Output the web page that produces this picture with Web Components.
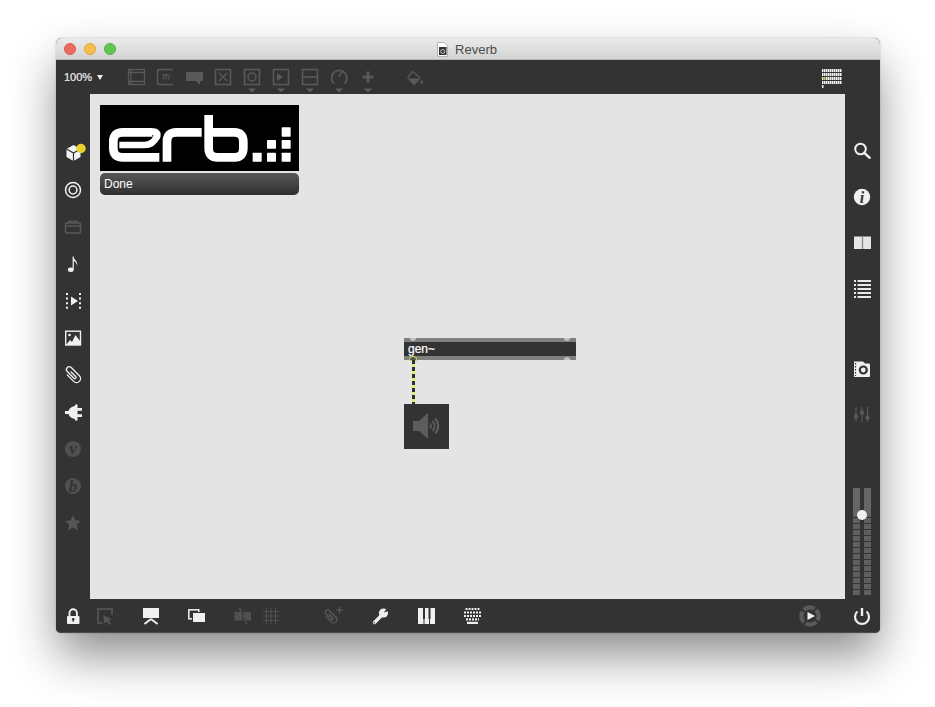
<!DOCTYPE html>
<html><head><meta charset="utf-8"><title>Reverb</title>
<style>
html,body{margin:0;padding:0;background:#fff;height:707px;overflow:hidden}
body{font-family:"Liberation Sans",Arial,sans-serif}
</style></head>
<body>
<max-window>
  <title-bar slot="title">Reverb</title-bar>
  <max-toolbar slot="top">
    <zoom-menu>100%</zoom-menu>
    <max-icon name="object" w="29" h="34"></max-icon>
    <max-icon name="message" w="29" h="34"></max-icon>
    <max-icon name="comment" w="29" h="34"></max-icon>
    <max-icon name="xbox" w="29" h="34"></max-icon>
    <max-icon name="toggle" w="29" h="34"></max-icon>
    <max-icon name="playbox" w="29" h="34"></max-icon>
    <max-icon name="slider" w="29" h="34"></max-icon>
    <max-icon name="dial" w="29" h="34"></max-icon>
    <max-icon name="plus" w="29" h="34"></max-icon>
    <max-icon name="bucket" w="29" h="34" style="margin-left:17px"></max-icon>
    <max-icon name="dots" w="20" h="34" style="margin-left:auto;margin-right:38px"></max-icon>
  </max-toolbar>
  <left-rail slot="left">
    <max-icon name="cube"></max-icon>
    <max-icon name="target"></max-icon>
    <max-icon name="film"></max-icon>
    <max-icon name="note"></max-icon>
    <max-icon name="cue"></max-icon>
    <max-icon name="image"></max-icon>
    <max-icon name="clip"></max-icon>
    <max-icon name="plug"></max-icon>
    <max-icon name="vee"></max-icon>
    <max-icon name="bee"></max-icon>
    <max-icon name="star"></max-icon>
  </left-rail>
  <patcher-canvas slot="canvas">
    <erb-logo></erb-logo>
    <done-label>Done</done-label>
    <gen-object>gen~</gen-object>
    <patch-cord></patch-cord>
    <dac-object></dac-object>
  </patcher-canvas>
  <right-rail slot="right">
    <max-icon name="search"></max-icon>
    <max-icon name="info"></max-icon>
    <max-icon name="book"></max-icon>
    <max-icon name="list"></max-icon>
    <max-icon name="camera" style="margin-top:34px"></max-icon>
    <max-icon name="mixer"></max-icon>
    <level-meter></level-meter>
  </right-rail>
  <bottom-bar slot="bottom">
    <max-icon name="lock" style="margin-left:2px"></max-icon>
    <max-icon name="select" style="margin-left:1px"></max-icon>
    <max-icon name="present" style="margin-left:16px"></max-icon>
    <max-icon name="windows" style="margin-left:16px"></max-icon>
    <max-icon name="snap" style="margin-left:16px"></max-icon>
    <max-icon name="grid" style="margin-left:-1px"></max-icon>
    <max-icon name="clipplus" style="margin-left:33px"></max-icon>
    <max-icon name="wrench" style="margin-left:16px"></max-icon>
    <max-icon name="piano" style="margin-left:16px"></max-icon>
    <max-icon name="keys" style="margin-left:16px"></max-icon>
    <max-icon name="transport" style="margin-left:308px"></max-icon>
    <max-icon name="power" style="margin-left:22px"></max-icon>
  </bottom-bar>
</max-window>
<script>
const D='#595959',W='#f0f0f0',B='#333333';
const dropArrow=`<path d="M10 28.5h8l-4 4z" fill="#5c5c5c"/>`;
const box=(inner)=>`<rect x="6.5" y="9.5" width="15" height="15" fill="none" stroke="${D}" stroke-width="1.6"/>${inner}`;
const clip=(c,sw)=>`<path d="M6 6V15a4 4 0 0 0 8 0V3.500a2.800 2.800 0 0 0-5.600 0V13a1.200 1.200 0 0 0 2.400 0V6.500" fill="none" stroke="${c}" stroke-width="${sw}" stroke-linecap="round"/>`;
function dots(){
  let s='';
  for(let r=0;r<4;r++)for(let c=0;c<10;c++){
    s+=`<rect x="${c*2}" y="${9+r*4}" width="1.5" height="3" fill="${(r==2&&c==1)?'#e2cc2a':'#f4f4f4'}"/>`;
  }
  s+=`<rect x="0" y="25" width="1.5" height="3" fill="#f4f4f4"/>`;
  return s;
}
const ICONS={
 object:`<rect x="6.5" y="9.5" width="16" height="15" fill="none" stroke="${D}" stroke-width="1.3"/><path d="M6 12.5h17M6 21.5h17M9 10v14" stroke="${D}" stroke-width="1.3" fill="none"/>`,
 message:`<path d="M22 9.5H9a2.5 2.5 0 0 0-2.5 2.5v10a2.5 2.5 0 0 0 2.5 2.5H22" fill="none" stroke="${D}" stroke-width="1.4"/><path d="M12 19.5l1.6-5M14.6 19.5l1.6-5M17.2 19.5l1.6-5" stroke="${D}" stroke-width="1.1" fill="none"/><path d="M11 14.5h6" stroke="${D}" stroke-width=".8"/>`,
 comment:`<path d="M6 12h17v9h-3v4l-4-4H6z" fill="${D}"/>`,
 xbox:box(`<path d="M10 13l8 8M18 13l-8 8" stroke="${D}" stroke-width="1.3"/>`),
 toggle:box(`<circle cx="14" cy="17" r="4" fill="none" stroke="${D}" stroke-width="1.5"/>`)+dropArrow,
 playbox:box(`<path d="M10 13l6 4-6 4z" fill="${D}"/>`)+dropArrow,
 slider:box(`<path d="M7 17h14" stroke="${D}" stroke-width="1.6"/>`)+dropArrow,
 dial:`<path d="M9 23.5a7.6 7.6 0 1 1 10.4 0" fill="none" stroke="${D}" stroke-width="1.7"/><path d="M14 17l3.5-6.5" stroke="${D}" stroke-width="1.5"/>`+dropArrow,
 plus:`<path d="M14 11.5v11M8.5 17h11" stroke="${D}" stroke-width="3"/>`+dropArrow,
 bucket:`<path d="M7.500 18.500H20.500L14 25.500z" fill="${D}"/><path d="M7.500 18.200L12.500 11.500 20.500 18.200" fill="none" stroke="${D}" stroke-width="1.400"/><ellipse cx="21.800" cy="22" rx="1.300" ry="1.800" fill="${D}"/>`,
 dots:dots(),
 cube:`<path d="M10.5 2L17.500 6v8l-7 4-7-4V6z" fill="#f2f2f2"/><path d="M3.500 6l7 4 7-4M10.500 10v8" stroke="#333" stroke-width="1.200" fill="none"/><circle cx="18" cy="5.500" r="4.700" fill="#e8d12e"/>`,
 target:`<circle cx="10" cy="10" r="7.500" fill="none" stroke="${W}" stroke-width="1.500"/><circle cx="10" cy="10" r="3.900" fill="none" stroke="${W}" stroke-width="1.500"/>`,
 film:`<rect x="2.500" y="6" width="15" height="10" rx="1" fill="none" stroke="${D}" stroke-width="1.500"/><path d="M5 4.300h10M3 9h14" stroke="${D}" stroke-width="1.300"/>`,
 note:`<ellipse cx="7.800" cy="15.800" rx="2.900" ry="2.200" fill="${W}"/><path d="M10.200 15.500V2.500" stroke="${W}" stroke-width="1.200"/><path d="M10.200 2.500c.5 3 4.900 4.200 4 9.500-.3-2.600-1.800-4.200-4-5.200z" fill="${W}"/>`,
 cue:`<path d="M4 2v16M17 2v16" stroke="${W}" stroke-width="2" stroke-dasharray="2 2.600"/><path d="M8 5.500l7 4.500-7 4.500z" fill="${W}"/>`,
 image:`<rect x="2.700" y="3.200" width="14.800" height="13.800" fill="none" stroke="${W}" stroke-width="1.400"/><path d="M3 17l4-5 2 2 3.500-7L17 13v4z" fill="${W}"/><circle cx="6.500" cy="7" r="1.300" fill="${W}"/>`,
 clip:`<g transform="rotate(-45 10 10)">${clip(W,1.300)}</g>`,
 plug:`<path d="M2 9h5v3H2z" fill="${W}"/><path d="M5.500 10.500C5.500 6.500 8.500 4.500 12 4V2.500h2.500V18.500H12V17c-3.500-.5-6.500-2.500-6.500-6.500z" fill="${W}"/><path d="M14 6h5v2.700h-5zM14 12.300h5V15h-5z" fill="${W}"/>`,
 vee:`<circle cx="10" cy="10" r="8" fill="#505050"/><text x="10" y="15" text-anchor="middle" font-family="'Liberation Serif',serif" font-style="italic" font-weight="bold" font-size="17" fill="#333">v</text>`,
 bee:`<circle cx="10" cy="10" r="8" fill="#505050"/><text x="10" y="15.500" text-anchor="middle" font-family="'Liberation Serif',serif" font-style="italic" font-weight="bold" font-size="17" fill="#333">b</text>`,
 star:`<path d="M10 2l2.300 5.300 5.700.6-4.300 3.800 1.300 5.700-5-3-5 3 1.300-5.700L2 7.900l5.700-.6z" fill="#565656"/>`,
 search:`<circle cx="8.500" cy="8" r="5.300" fill="none" stroke="${W}" stroke-width="2"/><path d="M12.300 11.800l5.400 5" stroke="${W}" stroke-width="2.400" stroke-linecap="round"/>`,
 info:`<circle cx="10" cy="10" r="8.200" fill="${W}"/><text x="10" y="15.500" text-anchor="middle" font-family="'Liberation Serif',serif" font-style="italic" font-weight="bold" font-size="16" fill="#333">i</text>`,
 book:`<rect x="2" y="3.500" width="17" height="12.500" fill="#e6e6e6"/><rect x="9.800" y="3.500" width="1.400" height="12.500" fill="#8f8f8f"/>`,
 list:`<path d="M2 2h2M2 6h2M2 10h2M2 14h2M2 18h2M5.500 2H19M5.500 6H19M5.500 10H19M5.500 14H19M5.500 18H19" stroke="#e8e8e8" stroke-width="2" fill="none"/>`,
 camera:`<path d="M2 2.500h9l2 2h4a1 1 0 0 1 1 1V17a1 1 0 0 1-1 1H2z" fill="${W}"/><path d="M3.500 4v13" stroke="#333" stroke-width="1.200" stroke-dasharray="1.600 1.400"/><circle cx="11.300" cy="11" r="3.500" fill="none" stroke="#333" stroke-width="2.200"/>`,
 mixer:`<path d="M4 2v15M10 2v15M15.500 2v15" stroke="#595959" stroke-width="1.200"/><ellipse cx="4" cy="11.500" rx="2.200" ry="2.600" fill="#595959"/><ellipse cx="10" cy="7.500" rx="2.200" ry="2.600" fill="#595959"/><ellipse cx="15.500" cy="12.500" rx="2.200" ry="2.600" fill="#595959"/>`,
 lock:`<path d="M6.500 10.500V7a3.700 3.700 0 0 1 7.400 0v3.500" fill="none" stroke="${W}" stroke-width="1.900"/><rect x="4" y="10" width="12.500" height="8" rx="1" fill="${W}"/><circle cx="10.200" cy="13.300" r="1.300" fill="#333"/><rect x="9.700" y="13.500" width="1" height="2.500" fill="#333"/>`,
 select:`<path d="M18 9V3H4V17H9" fill="none" stroke="#505050" stroke-width="2"/><path d="M9 9l9 4.200-3.200 1.300 2.200 3.500-2 1-2-3.500-2.500 2.300z" fill="#555"/>`,
 present:`<rect x="3" y="2" width="16" height="10" fill="${W}"/><path d="M11 13L4.500 18M11 13L17.500 18" stroke="${W}" stroke-width="2" fill="none"/>`,
 windows:`<rect x="2.800" y="3.800" width="10" height="9" fill="none" stroke="${W}" stroke-width="1.500"/><rect x="6.500" y="6.500" width="13" height="10" fill="${W}" stroke="#333" stroke-width="1"/>`,
 snap:`<path d="M2.500 6h7.500v8.500H2.500zM11.500 6H19V14.500H11.500z" fill="#505050"/><path d="M7.500 2l7 16" stroke="#5a5a5a" stroke-width="1.200"/><path d="M9.200 5.500l4.800 11" stroke="#333" stroke-width=".8"/>`,
 grid:`<path d="M5.500 2v16M10 2v16M14.500 2v16M2 5.500h16M2 10h16M2 14.500h16" stroke="#4f4f4f" stroke-width="1" fill="none"/>`,
 clipplus:`<g transform="translate(-1.500 2.500) scale(.82) rotate(-45 10 10)">${clip('#5a5a5a',1.500)}</g><path d="M15.500 1v6.500M12 4.200h7" stroke="#5a5a5a" stroke-width="1.300"/>`,
 wrench:`<path d="M4.500 16.500L12 9" stroke="${W}" stroke-width="3.400" stroke-linecap="round"/><circle cx="13.500" cy="7" r="4.600" fill="${W}"/><path d="M13.800 6.500L18 .8l3.500 3.400z" fill="#333"/><circle cx="4.300" cy="16.700" r=".7" fill="#333"/>`,
 piano:`<rect x="2" y="2" width="17" height="16" fill="${W}"/><path d="M7 2h2v11H7zM12.500 2h2v11h-2z" fill="#333"/><path d="M8 13v5M13.500 13v5" stroke="#333" stroke-width="1"/>`,
 keys:`<path d="M3.500 3h14M2 6.500h17M2 10h17M4 13.300h13" stroke="${W}" stroke-width="2.200" stroke-dasharray="2 1" fill="none"/><rect x="5" y="15.800" width="11" height="2.200" fill="${W}"/>`,
 transport:`<circle cx="10" cy="10" r="8.600" fill="none" stroke="#5a5a5a" stroke-width="4.200" stroke-dasharray="11.500 2" stroke-dashoffset="7"/><path d="M7.500 6l7.500 4-7.500 4z" fill="#f0f0f0"/>`,
 power:`<path d="M5.500 5.500a7 7 0 1 0 9 0" fill="none" stroke="${W}" stroke-width="2.200"/><path d="M10 2v8" stroke="${W}" stroke-width="2.400"/>`
};
function shadow(el,html){const r=el.attachShadow({mode:'open'});r.innerHTML=html;return r;}
customElements.define('max-icon',class extends HTMLElement{
 connectedCallback(){
  const w=this.getAttribute('w')||20,h=this.getAttribute('h')||20;
  shadow(this,`<style>:host{display:block;width:${w}px;height:${h}px;flex:none}svg{display:block;overflow:visible}</style>
  <svg width="${w}" height="${h}" viewBox="0 0 ${w} ${h}">${ICONS[this.getAttribute('name')]||''}</svg>`);
 }
});
customElements.define('max-window',class extends HTMLElement{
 constructor(){super();shadow(this,`<style>
 :host{display:grid;grid-template-columns:34px 755px 35px;grid-template-rows:22px 34px 505px 34px;width:824px;margin:38px 0 0 56px;background:#333;border-radius:6px 6px 5px 5px;box-shadow:0 24px 48px -2px rgba(0,0,0,.46),0 0 2px rgba(0,0,0,.25);overflow:visible}
 ::slotted([slot=title]),::slotted([slot=top]),::slotted([slot=bottom]){grid-column:1/4}
 </style><slot name="title"></slot><slot name="top"></slot><slot name="left"></slot><slot name="canvas"></slot><slot name="right"></slot><slot name="bottom"></slot>`);}
});
customElements.define('title-bar',class extends HTMLElement{
 constructor(){super();shadow(this,`<style>
 :host{display:flex;position:relative;align-items:center;justify-content:center;gap:7px;height:22px;box-sizing:border-box;background:linear-gradient(#ebebeb,#d3d3d3);border-radius:6px 6px 0 0;border-bottom:1px solid #b4b4b4;font:13px "Liberation Sans",Arial,sans-serif;color:#4c4c4c;padding:2px 2px 0 0}
 .lights{position:absolute;left:8px;top:5px;display:flex;gap:8px}
 .lights i{display:block;width:12px;height:12px;border-radius:50%;box-sizing:border-box}
 svg{display:block;margin-top:-1px}
 </style><div class="lights"><i style="background:#ee6a5f;border:1px solid #dc5950"></i><i style="background:#f5be4f;border:1px solid #dea73e"></i><i style="background:#62c655;border:1px solid #53ad46"></i></div>
 <svg width="11" height="15" viewBox="0 0 11 15"><path d="M.5.500h7l3 3v11H.500z" fill="#fff" stroke="#b5b5b5"/><rect x="2" y="5" width="7.500" height="8" fill="#333"/><circle cx="5.700" cy="9.500" r="2" fill="none" stroke="#ccc"/></svg><span><slot></slot></span>`);}
});
customElements.define('max-toolbar',class extends HTMLElement{
 constructor(){super();shadow(this,`<style>:host{display:flex;height:34px;background:#333;align-items:stretch}</style><slot></slot>`);}
});
customElements.define('zoom-menu',class extends HTMLElement{
 constructor(){super();shadow(this,`<style>:host{display:flex;align-items:center;gap:5px;width:58px;padding-left:8px;flex:none;color:#eee;font:11px/34px "Liberation Sans",Arial,sans-serif;-webkit-text-stroke:.2px #eee;margin-top:-1px}
 svg{display:block;margin-top:1px}</style><slot></slot><svg width="6" height="5" viewBox="0 0 6 5"><path d="M0 0h6L3 5z" fill="#eee"/></svg>`);}
});
customElements.define('left-rail',class extends HTMLElement{
 constructor(){super();shadow(this,`<style>:host{display:flex;flex-direction:column;align-items:center;gap:17px;padding-top:49px;background:#333;box-sizing:border-box}</style><slot></slot>`);}
});
customElements.define('right-rail',class extends HTMLElement{
 constructor(){super();shadow(this,`<style>:host{display:flex;flex-direction:column;align-items:center;gap:26px;padding:47px 1px 0 0;background:#333;box-sizing:border-box}</style><slot></slot>`);}
});
customElements.define('bottom-bar',class extends HTMLElement{
 constructor(){super();shadow(this,`<style>:host{display:flex;align-items:center;height:34px;background:#333;border-radius:0 0 5px 5px;border-bottom:1px solid #4a4a4a;box-sizing:border-box}
 ::slotted(max-icon){padding:0 5px}</style><slot></slot>`);}
});
customElements.define('level-meter',class extends HTMLElement{
 constructor(){super();shadow(this,`<style>:host{display:flex;gap:4px;width:18px;height:108px;position:relative;margin-top:37px;flex:none}
 i{display:block;width:7px;height:108px;background:linear-gradient(#666,#666) top/100% 27px no-repeat,repeating-linear-gradient(to bottom,#5f5f5f 0 5px,#333 5px 6px)}
 b{position:absolute;left:4px;top:22px;width:10px;height:10px;border-radius:50%;background:#efefef}
 </style><i></i><i></i><b></b>`);}
});
customElements.define('patcher-canvas',class extends HTMLElement{
 constructor(){super();shadow(this,`<style>:host{display:block;position:relative;background:#e4e4e4;overflow:hidden}</style><slot></slot>`);}
});
customElements.define('erb-logo',class extends HTMLElement{
 constructor(){super();shadow(this,`<style>:host{position:absolute;left:10px;top:11px;width:199px;height:66px;background:#000;display:block}svg{display:block}</style>
 <svg width="199" height="66" viewBox="132 30 597 198"><g fill="none" stroke="#fff" stroke-width="26">
 <path d="M310 187H200q-28 0-28-27v-20q0-28 28-28h85q22 0 14 14"/>
 <path d="M190 150h75q26 0 38-26" stroke-width="20"/>
 <path d="M333 200v-60q0-28 28-28h76"/>
 <path d="M458 60v100q0 27 27 27h50q27 0 27-27v-20q0-28-27-28h-77"/></g>
 <g fill="#fff"><rect x="590" y="173" width="27" height="27" rx="2"/><rect x="633" y="173" width="27" height="27" rx="2"/><rect x="677" y="173" width="27" height="27" rx="2"/><rect x="633" y="135" width="27" height="26" rx="2"/><rect x="677" y="135" width="27" height="26" rx="2"/><rect x="677" y="97" width="27" height="28" rx="2"/></g></svg>`);}
});
customElements.define('done-label',class extends HTMLElement{
 constructor(){super();shadow(this,`<style>:host{position:absolute;left:10px;top:79px;width:199px;height:22px;box-sizing:border-box;padding-left:4px;border-radius:5px;background:linear-gradient(#585858,#2f2f2f);color:#fff;font:12px/23px "Liberation Sans",Arial,sans-serif;display:block}</style><slot></slot>`);}
});
customElements.define('gen-object',class extends HTMLElement{
 constructor(){super();shadow(this,`<style>:host{position:absolute;left:314px;top:244px;width:172px;height:22px;box-sizing:border-box;display:block;background:#333;border-top:4px solid #808080;border-bottom:4px solid #808080;color:#fff;font:12px/14px "Liberation Sans",Arial,sans-serif;padding-left:4px;-webkit-text-stroke:.2px #fff}
 i{position:absolute;width:6px;height:3px;background:#c2c2c2}
 .t{top:-4px;border-radius:0 0 3px 3px}.b{bottom:-4px;border-radius:3px 3px 0 0}
 .l{left:6px}.r{left:160px}</style><slot></slot><i class="t l"></i><i class="t r"></i><i class="b l" style="background:#555;box-shadow:0 0 0 1px #c9d24d"></i><i class="b r"></i>`);}
});
customElements.define('patch-cord',class extends HTMLElement{
 constructor(){super();shadow(this,`<style>:host{position:absolute;left:322px;top:266px;width:3px;height:44px;display:block;background:repeating-linear-gradient(to bottom,#2e2e2e 0 4px,#dfee6a 4px 7px)}</style>`);}
});
customElements.define('dac-object',class extends HTMLElement{
 constructor(){super();shadow(this,`<style>:host{position:absolute;left:314px;top:310px;width:45px;height:45px;background:#333;display:block}svg{display:block}</style>
 <svg width="45" height="45" viewBox="0 0 45 45"><path d="M9 17h6l9-8v26l-9-8H9z" fill="#5c5c5c"/><g fill="none" stroke="#5c5c5c" stroke-width="1.800"><path d="M26 19.500a3.500 3.500 0 0 1 0 5"/><path d="M28.500 17a7 7 0 0 1 0 10"/><path d="M31 14.500a10.500 10.500 0 0 1 0 15" stroke-width="2.200"/></g></svg>`);}
});
</script>
</body></html>
